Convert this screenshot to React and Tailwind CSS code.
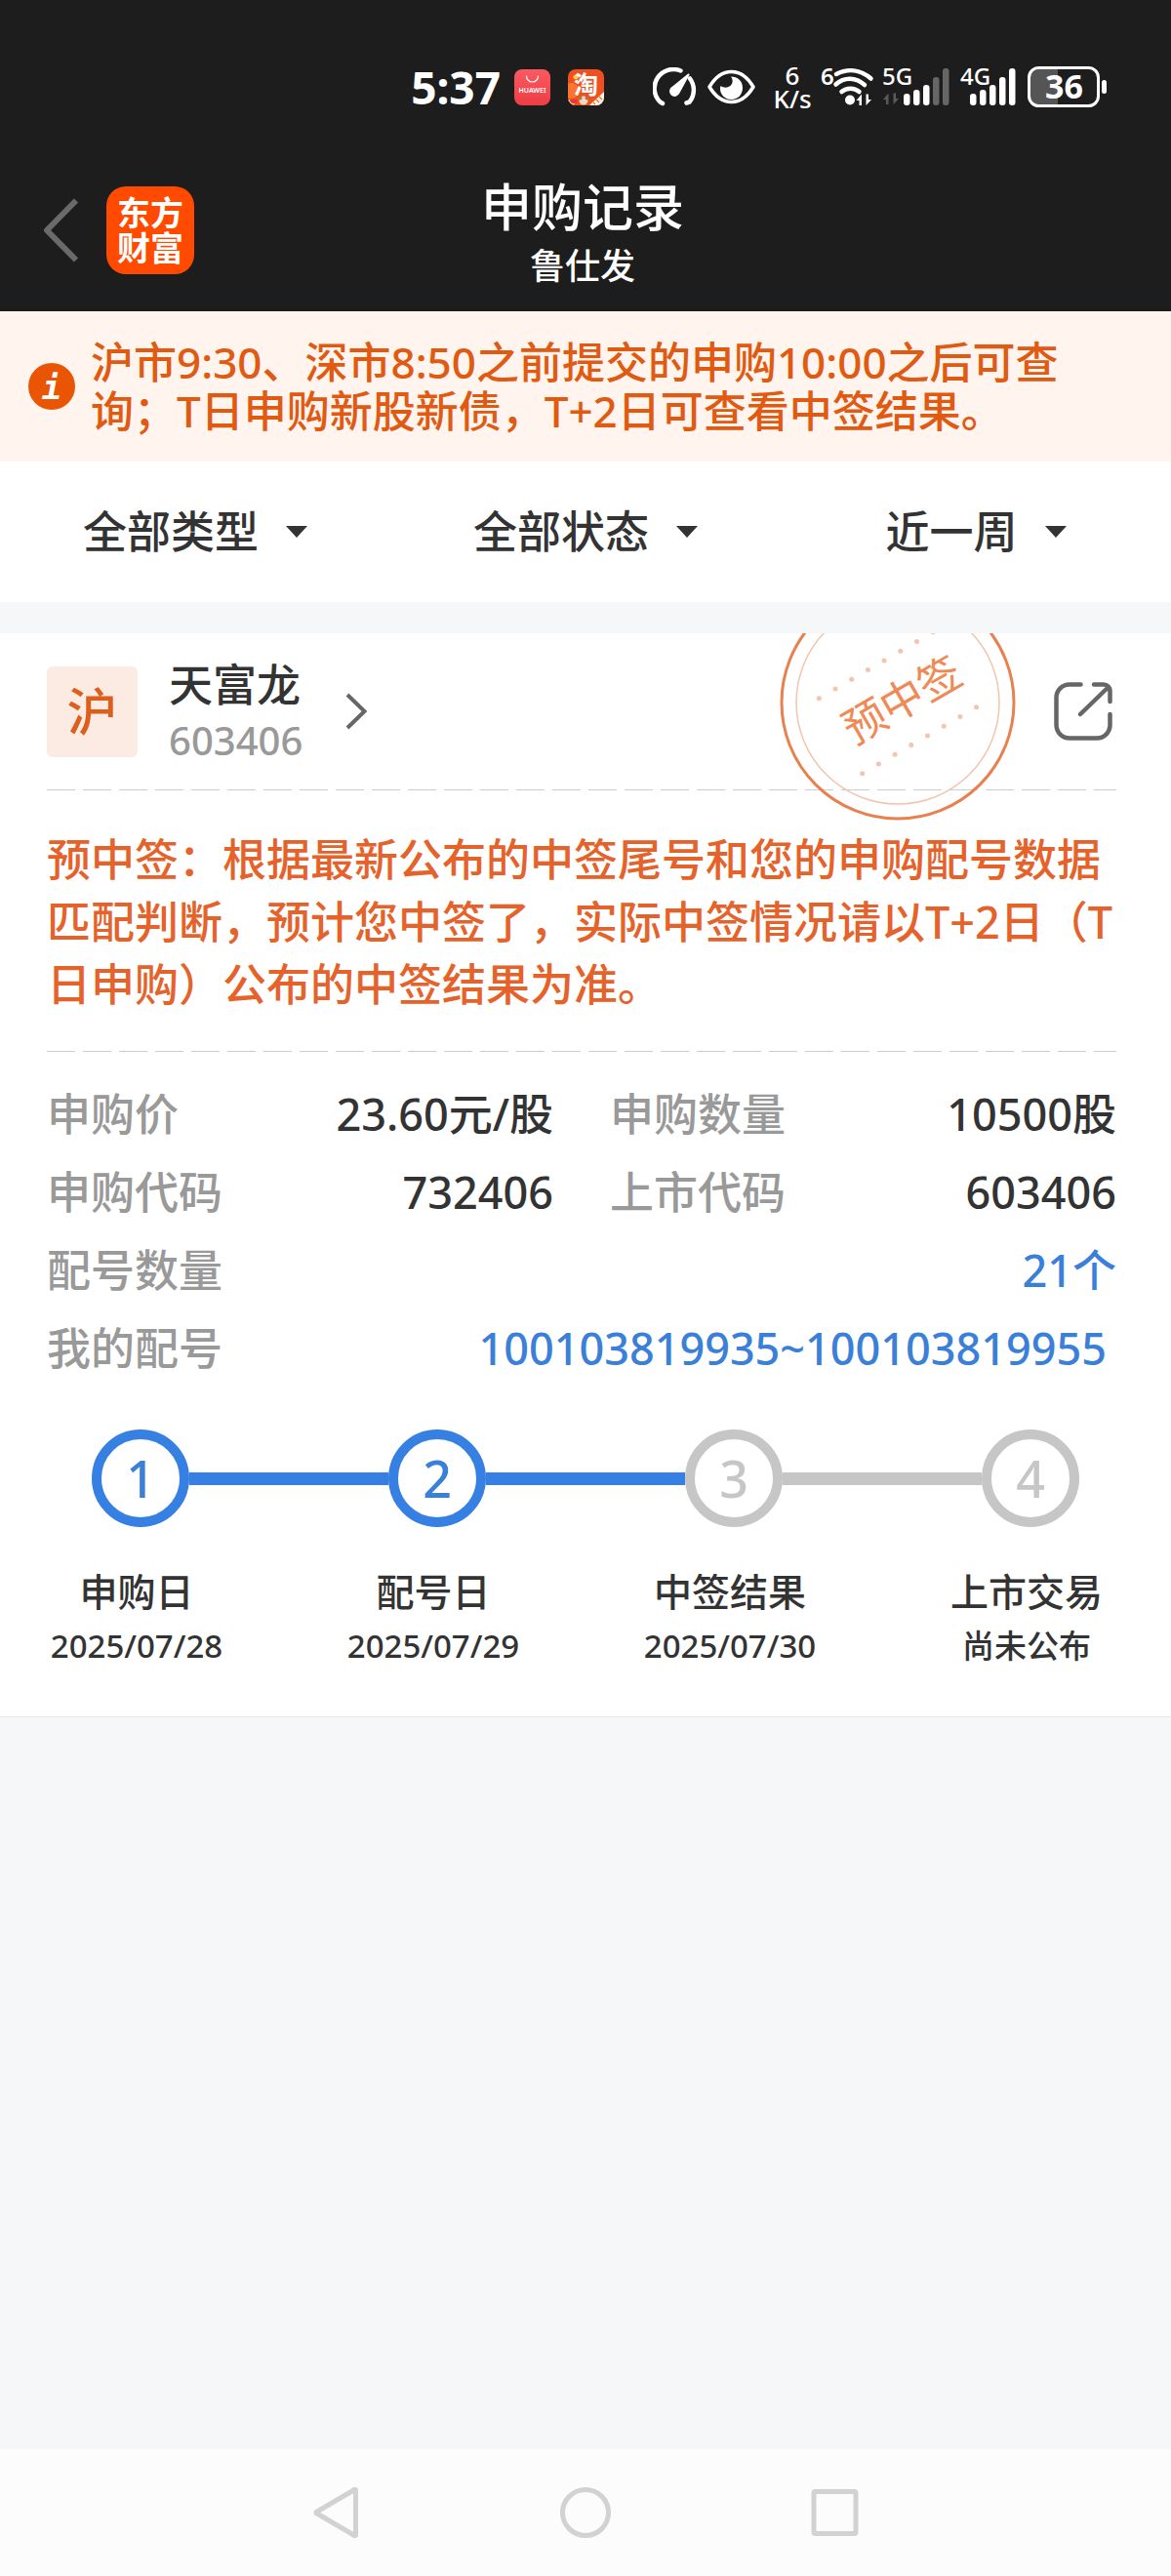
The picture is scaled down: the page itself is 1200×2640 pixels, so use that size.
import { useState } from "react";

const filters = [
  { id: "type", label: "类型", options: ["全部类型", "新股", "新债"] },
  { id: "status", label: "状态", options: ["全部状态", "已中签", "未中签"] },
  { id: "range", label: "时间", options: ["近一周", "近一月", "近三月"] },
];

const details = [
  { label: "申购价", value: "23.60元/股" },
  { label: "申购数量", value: "10500股" },
  { label: "申购代码", value: "732406" },
  { label: "上市代码", value: "603406" },
];

const steps = [
  { title: "申购日", date: "2025/07/28", done: true },
  { title: "配号日", date: "2025/07/29", done: true },
  { title: "中签结果", date: "2025/07/30", done: false },
  { title: "上市交易", date: "尚未公布", done: false },
];

const dots = [0, 1, 2, 3, 4, 5, 6, 7];

function HuaweiIcon() {
  return (
    <svg width="37" height="37" viewBox="0 0 37 37" className="mr-2 shrink-0">
      <defs>
        <linearGradient id="hw" x1="0" y1="0" x2="0" y2="1">
          <stop offset="0" stopColor="#fb5a62" />
          <stop offset="1" stopColor="#ee3d45" />
        </linearGradient>
      </defs>
      <rect width="37" height="37" rx="8" fill="url(#hw)" />
      <path d="M12.5 7a6 6 0 0 0 12 0" fill="none" stroke="#fff" strokeWidth="1.2" strokeLinecap="round" />
      <text x="18.5" y="23.5" textAnchor="middle" fill="#fff" className="text-[7px] font-semibold">
        HUAWEI
      </text>
    </svg>
  );
}

function TaobaoIcon() {
  return (
    <svg width="37" height="37" viewBox="0 0 37 37" className="mr-10 shrink-0 overflow-visible">
      <defs>
        <clipPath id="tb">
          <rect width="37" height="37" rx="8" />
        </clipPath>
      </defs>
      <g clipPath="url(#tb)">
        <rect width="37" height="37" fill="#f0501f" />
        <circle cx="3" cy="22" r="8" fill="#f9762f" />
        <circle cx="8" cy="8" r="2.5" fill="#ffc83a" />
        <path d="M22 37 37 23v14z" fill="#fff4e6" />
        <path d="m26 34 2 2M29 31l3 3M32 28l3 3" stroke="#e2703a" strokeWidth="1.3" />
        <path d="M0 31h9l-3 6H0z" fill="#ffd25c" />
        <path d="M2 31h8a4 4 0 0 1-8 0z" fill="#e8324c" />
        <circle cx="16" cy="32" r="4.5" fill="#f6d9bd" />
        <circle cx="12.5" cy="29.5" r="2" fill="#a8764c" />
        <circle cx="19.5" cy="29.5" r="2" fill="#a8764c" />
      </g>
      <text x="18.5" y="25" textAnchor="middle" fill="#fff" className="text-[25px] font-bold">
        淘
      </text>
    </svg>
  );
}

function GaugeIcon() {
  return (
    <svg width="46" height="40" viewBox="0 0 46 40" fill="none" stroke="#fff" className="shrink-0">
      <path
        d="M10 37 7.500 35.500A19.500 19.500 0 0 1 28.500 3.500M38 11.500a19.500 19.500 0 0 1-.5 24L34.500 36.500"
        strokeWidth="4.500"
        strokeLinecap="round"
        strokeLinejoin="round"
      />
      <path d="M36.500 7.500 26.500 26a4.400 4.400 0 1 1-6-5.500z" fill="#fff" strokeWidth="2" strokeLinejoin="round" />
    </svg>
  );
}

function EyeIcon() {
  return (
    <svg width="49" height="36" viewBox="0 0 49 36" fill="none" className="mr-2 shrink-0">
      <path
        d="M2 18C8 8 16 2.500 24.500 2.500S41 8 47 18c-6 10-14 15.500-22.500 15.500S8 28 2 18z"
        stroke="#fff"
        strokeWidth="3.500"
        strokeLinejoin="round"
      />
      <path
        d="M24 7.500c7 0 12 4.500 12 11.500s-5 12-11.500 12S13 26 13 20c0-1 .2-2 .5-3 5 3.500 11 1 12-3.500.4-2.500-.2-4.500-1.500-6z"
        fill="#fff"
      />
    </svg>
  );
}

function WifiIcon() {
  return (
    <svg width="53" height="40" viewBox="0 0 53 40" fill="none" stroke="#fff" className="shrink-0 overflow-visible">
      <text x="-1" y="18" fill="#fff" stroke="none" className="text-[24px] font-semibold">
        6
      </text>
      <path d="M15 7c11.500-6 24.500-5 35.500 4.500" strokeWidth="4.500" strokeLinecap="round" />
      <path d="M14.500 17.500c9-8 20.500-7.500 29.500.5M20.500 25c5-4.500 13-4.500 18 0" strokeWidth="4.500" strokeLinecap="round" />
      <circle cx="29" cy="33.500" r="5" fill="#fff" stroke="none" />
      <path d="M35.500 34 41 27.500V39h-2.500v-5zM51 33l-5.500 6V27.500H48V33z" fill="#fff" stroke="none" />
    </svg>
  );
}

function SignalIcon({ label, level, offset, arrows, width }) {
  const tops = [27, 23, 18, 10, 1];
  return (
    <svg width={width} height="40" className="shrink-0 overflow-visible">
      <text x="-1" y="18" fill="#fff" className="text-[24px] font-medium">
        {label}
      </text>
      {arrows && <path d="M0 33 5.500 26.500V38H3v-5zM16 32l-5.500 6V26.500H13V32z" fill="#5a5a5a" />}
      {tops.map((top, i) => (
        <rect
          key={top}
          x={offset + i * 10}
          y={top}
          width="6.500"
          height={39 - top}
          rx="3"
          fill={i < level ? "#fff" : "#666"}
        />
      ))}
    </svg>
  );
}

function BatteryIcon() {
  return (
    <svg width="82" height="42" viewBox="0 0 82 42" className="shrink-0 overflow-visible">
      <path d="M12 3h19v36H12a10 10 0 0 1-10-10V13A10 10 0 0 1 12 3z" fill="#555" />
      <rect x="1.500" y="1.500" width="71" height="39" rx="10" fill="none" stroke="#fff" strokeWidth="3" />
      <rect x="76" y="14" width="5" height="14" rx="2.500" fill="#fff" />
      <text x="37.500" y="33" textAnchor="middle" fill="#fff" className="text-[34px] font-bold">
        36
      </text>
    </svg>
  );
}

function StatusBar() {
  return (
    <div className="flex h-[152px] items-center justify-end gap-[10px] pt-[26px] pr-[65px]">
      <time className="mr-1 text-[46px] leading-[60px] font-bold">5:37</time>
      <HuaweiIcon />
      <TaobaoIcon />
      <GaugeIcon />
      <EyeIcon />
      <div className="w-10 text-center text-[26px] leading-6 font-medium">
        6<br />
        K/s
      </div>
      <WifiIcon />
      <SignalIcon label="5G" level={3} offset={21} width={70} arrows />
      <SignalIcon label="4G" level={5} offset={9} width={58} />
      <BatteryIcon />
    </div>
  );
}

function TitleBar() {
  return (
    <div className="grid h-[167px] grid-cols-[1fr_auto_1fr] items-center pr-[50px] pl-11">
      <div className="flex items-center gap-7">
        <button type="button" aria-label="返回">
          <svg width="37" height="66" viewBox="0 0 37 66" fill="none" stroke="#6a6a6a" strokeWidth="6">
            <path d="M34 2.500 4 33l30 30.500" strokeLinejoin="round" />
          </svg>
        </button>
        <div className="grid size-[90px] place-content-center rounded-[20px] bg-[#ff4a00] text-center text-[34px] leading-[36px] font-bold">
          东方
          <br />
          财富
        </div>
      </div>
      <div className="pt-1 text-center">
        <h1 className="text-[52px] leading-[70px] font-medium">申购记录</h1>
        <p className="text-[36px] leading-[52px] font-medium">鲁仕发</p>
      </div>
    </div>
  );
}

function Notice() {
  return (
    <div className="flex items-center gap-4 bg-[#fff4ee] py-[27px] pr-[72px] pl-[29px] text-[#e05a12]">
      <svg width="48" height="48" viewBox="0 0 48 48" className="shrink-0">
        <circle cx="24" cy="24" r="24" fill="#ea5504" />
        <text
          x="24"
          y="37"
          textAnchor="middle"
          fill="#fff"
          className="text-[34px] font-bold italic [font-family:'DejaVu_Sans_Mono',monospace]"
        >
          i
        </text>
      </svg>
      <p className="text-[44px] leading-[50px] font-medium">
        沪市9:30、深市8:50之前提交的申购10:00之后可查询；T日申购新股新债，T+2日可查看中签结果。
      </p>
    </div>
  );
}

function Filters() {
  const [values, setValues] = useState({
    type: "全部类型",
    status: "全部状态",
    range: "近一周",
  });

  return (
    <div className="grid h-36 grid-cols-3 bg-white">
      {filters.map((f) => (
        <label key={f.id} className="flex items-center justify-center gap-7">
          <select
            aria-label={f.label}
            value={values[f.id]}
            onChange={(e) => setValues({ ...values, [f.id]: e.target.value })}
            className="field-sizing-content appearance-none text-[45px] leading-[64px] font-medium outline-none"
          >
            {f.options.map((o) => (
              <option key={o}>{o}</option>
            ))}
          </select>
          <svg width="22" height="12" viewBox="0 0 22 12" className="pointer-events-none">
            <path d="M0 0h22L11 12z" fill="#333" />
          </svg>
        </label>
      ))}
    </div>
  );
}

function Stamp() {
  return (
    <svg
      width="242"
      height="242"
      viewBox="-121 -121 242 242"
      className="pointer-events-none absolute -top-[50px] right-[159px]"
    >
      <circle r="119" fill="none" stroke="#e9804f" strokeWidth="3" />
      <circle r="104" fill="none" stroke="#f3c4ae" strokeWidth="1.500" />
      {dots.map((i) => (
        <g key={i} fill="#f3c4ae">
          <circle cx={-80.7 + i * 16.7} cy={-4.3 - i * 9.7} r="2.500" />
          <circle cx={-36.3 + i * 16.7} cy={72.7 - i * 9.7} r="2.500" />
        </g>
      ))}
      <text transform="rotate(-30)" x="5" y="16" textAnchor="middle" fill="#f08a55" className="text-[44px]">
        预中签
      </text>
    </svg>
  );
}

function Divider() {
  return (
    <div className="h-px bg-[repeating-linear-gradient(90deg,#ccc_0,#ccc_29px,transparent_29px,transparent_37px)]" />
  );
}

function Steps() {
  return (
    <div>
      <div className="flex items-center px-[94px]">
        {steps.map((s, i) => (
          <div key={s.title} className={i === 0 ? "flex items-center" : "flex flex-1 items-center"}>
            {i > 0 && (
              <div className={steps[i - 1].done ? "h-[13px] flex-1 bg-[#3580e2]" : "h-[13px] flex-1 bg-[#c6c6c6]"} />
            )}
            <div
              className={
                s.done
                  ? "grid size-[100px] place-content-center rounded-full border-10 border-[#3580e2] text-[52px] leading-none font-medium text-[#3a80d8]"
                  : "grid size-[100px] place-content-center rounded-full border-10 border-[#c6c6c6] text-[52px] leading-none font-medium text-[#c6c6c6]"
              }
            >
              {i + 1}
            </div>
          </div>
        ))}
      </div>
      <ol className="mt-9 flex justify-between pr-12 pl-10 text-center font-medium">
        {steps.map((s) => (
          <li key={s.title} className="w-50">
            <h3 className="text-[39px] leading-[60px]">{s.title}</h3>
            <p className="text-[33px] leading-[52px]">{s.date}</p>
          </li>
        ))}
      </ol>
    </div>
  );
}

function RecordCard() {
  return (
    <section className="relative mt-8 overflow-hidden border-b border-[#e6e7e9] bg-white pb-[46px]">
      <div className="px-12 pr-14">
        <div className="flex h-40 items-center">
          <div className="grid size-[93px] place-content-center rounded-md bg-[#fcebe2] text-[52px] leading-none font-medium text-[#dd5f1c]">
            沪
          </div>
          <div className="ml-8">
            <h2 className="text-[45px] leading-[60px] font-medium">天富龙</h2>
            <p className="text-[40px] leading-[54px] font-medium text-[#999]">603406</p>
          </div>
          <button type="button" aria-label="查看详情" className="ml-11">
            <svg width="23" height="38" viewBox="0 0 23 38" fill="none" stroke="#666" strokeWidth="4">
              <path d="m2 2 17.500 17L2 36" />
            </svg>
          </button>
          <button type="button" aria-label="分享" className="mr-1 ml-auto">
            <svg
              width="60"
              height="60"
              viewBox="0 0 60 60"
              fill="none"
              stroke="#666"
              strokeWidth="4.500"
              strokeLinecap="round"
            >
              <path d="M27.500 2.500H16A13.500 13.500 0 0 0 2.500 16v28A13.500 13.500 0 0 0 16 57.500h28A13.500 13.500 0 0 0 57.500 44V33" />
              <path d="M41 2.500h10a6.500 6.500 0 0 1 6.500 6.500v11M27 33 56 5" />
            </svg>
          </button>
        </div>
        <Divider />
        <p className="pt-[39px] pb-9 text-[45px] leading-[64px] font-medium text-[#e5622a]">
          预中签：根据最新公布的中签尾号和您的申购配号数据匹配判断，预计您中签了，实际中签情况请以T+2日（T日申购）公布的中签结果为准。
        </p>
        <Divider />
        <dl className="mt-6 grid grid-cols-2 gap-x-[58px] text-[45px] leading-[80px] font-medium">
          {details.map((d) => (
            <div key={d.label} className="flex justify-between">
              <dt className="text-[#999]">{d.label}</dt>
              <dd>{d.value}</dd>
            </div>
          ))}
          <div className="col-span-2 flex justify-between">
            <dt className="text-[#999]">配号数量</dt>
            <dd className="text-[#3a80d8]">21个</dd>
          </div>
          <div className="col-span-2 flex justify-between pr-[10px]">
            <dt className="text-[#999]">我的配号</dt>
            <dd>
              <a href="#numbers" className="text-[#3a80d8]">
                100103819935~100103819955
              </a>
            </dd>
          </div>
        </dl>
      </div>
      <div className="mt-[43px]">
        <Steps />
      </div>
      <Stamp />
    </section>
  );
}

function NavBar() {
  return (
    <nav className="flex h-[130px] items-center justify-center gap-51 bg-[#fcfcfc]">
      <button type="button" aria-label="后退">
        <svg width="52" height="52" viewBox="0 0 52 52" fill="none" stroke="#d2d2d2" strokeWidth="5">
          <path d="M46.500 3.500v45a1 1 0 0 1-2 .5L7 27a1 1 0 0 1 0-2L44.500 3a1 1 0 0 1 2 .5z" />
        </svg>
      </button>
      <button type="button" aria-label="主页">
        <svg width="52" height="52" viewBox="0 0 52 52" fill="none" stroke="#d2d2d2" strokeWidth="5">
          <circle cx="26" cy="26" r="23.500" />
        </svg>
      </button>
      <button type="button" aria-label="最近任务">
        <svg width="52" height="52" viewBox="0 0 52 52" fill="none" stroke="#d2d2d2" strokeWidth="5">
          <rect x="4" y="4.500" width="43" height="43" rx="1.500" />
        </svg>
      </button>
    </nav>
  );
}

export default function App() {
  return (
    <div className="flex min-h-screen flex-col bg-[#f6f7f9] text-[#333] [font-family:'Noto_Sans','Noto_Sans_CJK_SC',sans-serif]">
      <header className="bg-[#1d1d1d] text-white">
        <StatusBar />
        <TitleBar />
      </header>
      <main className="flex-1">
        <Notice />
        <Filters />
        <RecordCard />
      </main>
      <NavBar />
    </div>
  );
}
